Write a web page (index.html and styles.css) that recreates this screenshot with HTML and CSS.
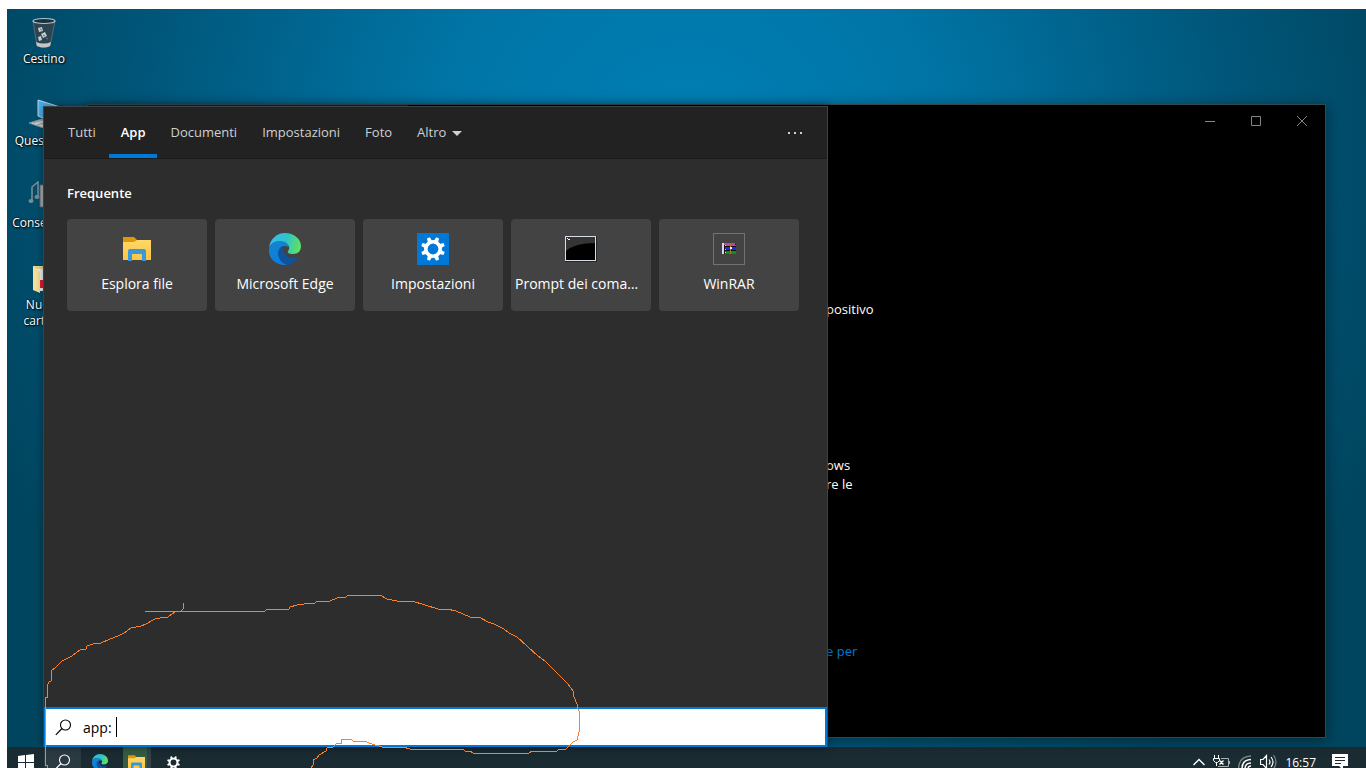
FILE: index.html
```html
<!DOCTYPE html>
<html lang="it">
<head>
<meta charset="UTF-8">
<meta name="viewport" content="width=device-width, initial-scale=1.0">
<title>Desktop</title>
<link rel="stylesheet" href="styles.css">
</head>
<body>

<!-- icons used both in the search panel and in the taskbar -->
<svg class="defs" aria-hidden="true">
  <defs>
    <linearGradient id="folderFill" x1="0" y1="0" x2="0" y2="1">
      <stop offset="0" stop-color="#ffd868"/>
      <stop offset="1" stop-color="#fbc540"/>
    </linearGradient>
    <linearGradient id="edgeTop" x1="0" y1="0.4" x2="1" y2="0.6">
      <stop offset="0" stop-color="#35bdf0"/>
      <stop offset="0.5" stop-color="#2fc3c8"/>
      <stop offset="1" stop-color="#62e35c"/>
    </linearGradient>
    <linearGradient id="edgeLeft" x1="0" y1="0" x2="0.3" y2="1">
      <stop offset="0" stop-color="#1585cf"/>
      <stop offset="1" stop-color="#0a7ede"/>
    </linearGradient>
    <symbol id="folder" viewBox="0 0 28 24">
      <path d="M0 0h11l3 3v4H0z" fill="#dd9a05"/>
      <path d="M0 5h11l3-2h14v20H0z" fill="url(#folderFill)"/>
      <path d="M5 24V14q0-2 2-2h14q2 0 2 2v10h-4v-7H9v7z" fill="#3b97dc"/>
    </symbol>
    <symbol id="edge" viewBox="0 0 32 32">
      <path d="M0 15C1 6 8 0 16 0c9 0 16 6 16 13 0 5-3 8-8 8-4 0-6-1-5-3 2-2 2-6-3-8-6-3-14-1-16 5z" fill="url(#edgeTop)"/>
      <path d="M0 16C1 10 6 8 11 8c5 0 9 3 9 6-6-3-11 1-10 7 1 6 4 9 8 11C8 33-1 26 0 16z" fill="url(#edgeLeft)"/>
      <path d="M14 13c-5 2-6 7-4 12 2 4 5 6 9 7 5-1 8-4 10-7 0-1 0-1-1-1-4 2-9 1-12-3-2-3-3-6-2-8z" fill="#10529b"/>
    </symbol>
    <symbol id="gear" viewBox="-12 -12 24 24">
      <circle r="7.2" fill="none" stroke="currentColor" stroke-width="3.6"/>
      <g fill="currentColor">
        <path id="tooth" d="M-2.2-8l.6-4h3.2l.6 4z" transform="rotate(22.5)"/>
        <use href="#tooth" transform="rotate(45)"/>
        <use href="#tooth" transform="rotate(90)"/>
        <use href="#tooth" transform="rotate(135)"/>
        <use href="#tooth" transform="rotate(180)"/>
        <use href="#tooth" transform="rotate(225)"/>
        <use href="#tooth" transform="rotate(270)"/>
        <use href="#tooth" transform="rotate(315)"/>
      </g>
    </symbol>
    <symbol id="lens" viewBox="0 0 17 17">
      <circle cx="10.5" cy="6" r="5" fill="none" stroke="currentColor" stroke-width="1.1"/>
      <path d="M7 9.5L.8 15.8" fill="none" stroke="currentColor" stroke-width="1.2"/>
    </symbol>
  </defs>
</svg>

<div class="desktop">
  <main class="workspace">

    <div class="shortcuts">
      <a class="shortcut" href="#">
        <svg class="shortcut-icon" viewBox="0 0 32 32">
          <path d="M5 4l4 25q7 3 13 0l5-25z" fill="#2b4450" stroke="#566a74" stroke-width="1"/>
          <path d="M8 25l1 4q7 3 13 0l1-4q-7 3-15 0z" fill="#c3c5c8"/>
          <ellipse cx="16" cy="4" rx="11" ry="2.5" fill="#16323f" stroke="#b5c2c8" stroke-width="1.2"/>
          <path d="M10 11l4-1 1 4-4 1zM13 17l4-2 2 4-4 2zM10 20l3-1 1 4-3 1z" fill="#c6cdd1"/>
          <path d="M12 12l2 1M15 18l2 1M18 21l2 1" stroke="#627985"/>
        </svg>
        <span>Cestino</span>
      </a>
      <a class="shortcut" href="#">
        <svg class="shortcut-icon" viewBox="0 0 32 32">
          <path d="M10 1l22 7v18L10 17z" fill="#47aeed" stroke="#c4d3dc"/>
          <path d="M1 24l13-4 16 6-12 4z" fill="#c9cdd0" stroke="#7f8b91"/>
          <path d="M5 24l10-3M9 26l10-3" stroke="#8d979c"/>
        </svg>
        <span>Questo PC</span>
      </a>
      <a class="shortcut" href="#">
        <svg class="shortcut-icon" viewBox="0 0 32 32">
          <path d="M12 4h16v22H12z" fill="#a8aeb1" stroke="#5c686d"/>
          <path d="M4 19V6l6-5v15" fill="none" stroke="#7e8a91" stroke-width="1.6"/>
          <ellipse cx="3" cy="20" rx="2.5" ry="2" fill="#7e8a91"/>
          <ellipse cx="9" cy="16" rx="2.5" ry="2" fill="#7e8a91"/>
        </svg>
        <span>Conservato</span>
      </a>
      <a class="shortcut" href="#">
        <svg class="shortcut-icon" viewBox="0 0 32 32">
          <path d="M5 3h22v24H5z" fill="#ead48c"/>
          <path d="M9 6h16v22H9z" fill="#eef0f1"/>
          <path d="M11 17h8v8h-8z" fill="#d5202e"/>
          <path d="M5 3l7 6v21l-7-3z" fill="#f6e09a"/>
        </svg>
        <span>Nuova<br>cartella</span>
      </a>
    </div>

    <section class="window">
      <div class="window-nav"></div>
      <div class="window-page">
        <div class="window-controls">
          <button class="control" aria-label="Riduci a icona"><svg width="10" height="10"><path d="M0 5.5h10"/></svg></button>
          <button class="control" aria-label="Ingrandisci"><svg width="10" height="10"><path d="M.5.5h9v9h-9z"/></svg></button>
          <button class="control" aria-label="Chiudi"><svg width="10" height="10"><path d="M0 0l10 10M10 0L0 10"/></svg></button>
        </div>
        <div class="window-text">
          <p>positivo</p>
          <p class="block">ows<br>re le</p>
          <p class="link-row"><a href="#">e per</a></p>
        </div>
      </div>
    </section>

    <section class="search-panel">
      <nav class="tabs">
        <button class="tab">Tutti</button>
        <button class="tab active">App</button>
        <button class="tab">Documenti</button>
        <button class="tab">Impostazioni</button>
        <button class="tab">Foto</button>
        <button class="tab">Altro <span class="arrow"></span></button>
        <button class="more" aria-label="Opzioni">
          <svg width="14" height="2" fill="currentColor"><path d="M0 0h2v2H0zM6 0h2v2H6zM12 0h2v2h-2z"/></svg>
        </button>
      </nav>

      <div class="results">
        <h2>Frequente</h2>
        <div class="cards">
          <button class="card">
            <svg class="card-icon" viewBox="0 0 32 32"><use href="#folder" x="2" y="4" width="28" height="24"/></svg>
            <span>Esplora file</span>
          </button>
          <button class="card">
            <svg class="card-icon"><use href="#edge"/></svg>
            <span>Microsoft Edge</span>
          </button>
          <button class="card">
            <svg class="card-icon settings" viewBox="0 0 32 32"><use href="#gear" x="4" y="4" width="24" height="24"/></svg>
            <span>Impostazioni</span>
          </button>
          <button class="card">
            <svg class="card-icon" viewBox="0 0 32 32">
              <path d="M0 3h32v26H0z" fill="#20272d"/>
              <path d="M0 3h31v25H0z" fill="#d5dde8"/>
              <path d="M1 4h29v23H1z" fill="#000"/>
              <path d="M1 4h29v6Q10 10 1 18z" fill="#353535"/>
              <path d="M2 5.500h1M3 6.500h2" stroke="#fff"/>
            </svg>
            <span class="long">Prompt dei comandi</span>
          </button>
          <button class="card">
            <svg class="card-icon" viewBox="0 0 32 32" shape-rendering="crispEdges">
              <path d="M.5.5h31v31H.5z" fill="none" stroke="#727272"/>
              <path d="M11 10h11l1 2v9H11z" fill="#111"/>
              <path d="M11 10h11l1 3H12z" fill="#b34ca0"/>
              <path d="M12 14h11v3H12z" fill="#1c2bdd"/>
              <path d="M12 18h11v3H12z" fill="#0c9112"/>
              <path d="M9 10h2v11H9z" fill="#d8d8ee"/>
              <path d="M17 10h1v11h-1z" fill="#b0732c"/>
              <path d="M17 14h2v2h-2z" fill="#eee"/>
              <path d="M12 12h1v1h-1zM12 16h1v1h-1zM12 19h1v1h-1z" fill="#e8d34a"/>
            </svg>
            <span>WinRAR</span>
          </button>
        </div>
      </div>

      <label class="search-box">
        <svg width="17" height="17"><use href="#lens"/></svg>
        <input type="text" value="app: " aria-label="Cerca">
        <span class="caret"></span>
      </label>
    </section>
  </main>

  <footer class="taskbar">
    <button class="task" aria-label="Start">
      <svg width="16" height="16" fill="#fff"><path d="M0 2l7-1v7H0zM8 1l8-1v8H8zM0 9h7v7l-7-1zM8 9h8v7l-8-1z"/></svg>
    </button>
    <button class="task current" aria-label="Cerca"><svg width="17" height="17"><use href="#lens"/></svg></button>
    <button class="task" aria-label="Microsoft Edge"><svg width="16" height="16"><use href="#edge"/></svg></button>
    <button class="task explorer" aria-label="Esplora file"><svg width="17" height="15"><use href="#folder"/></svg></button>
    <button class="task" aria-label="Impostazioni"><svg width="13" height="13"><use href="#gear"/></svg></button>

    <div class="tray">
      <svg width="12" height="16" fill="none" stroke="#fff" stroke-width="1.400"><path d="M.5 11L6 5.500l5.500 5.500"/></svg>
      <svg width="17" height="16" fill="none" stroke="#fff">
        <path d="M1.500 1v3M5.500 1v3M.5 4.500h6v2l-2 2h-2l-2-2zM3.500 8v4"/>
        <path d="M8 4.500h7.500v8H5M16.500 7v3" stroke="#aab1b4"/>
        <path d="M6.500 6.500l4 4M10.500 6.500l-4 4" stroke-width="1.400"/>
      </svg>
      <svg width="14" height="16" fill="none" stroke="#fff" stroke-width="1.400">
        <path d="M.7 14Q1 2.500 13 2" stroke="#7c878b"/>
        <path d="M4 14.500Q4 6 13 5.500M7 15q0-6 6-6M10 15q0-3 3-3"/>
      </svg>
      <svg width="17" height="16" fill="none" stroke="#fff" stroke-width="1.200">
        <path d="M.5 5.500h2.500l3.500-4v13l-3.500-4H.5z"/>
        <path d="M9 5.500q2 2.500 0 5M11 3q4 5 0 10"/>
        <path d="M13.500 1q5 7 0 14" stroke="#7c878b"/>
      </svg>
      <time class="clock">16:57</time>
      <svg width="16" height="16"><path d="M0 0h16v12h-5v4l-4-4H0z" fill="#fff"/><path d="M3 3.500h10M3 6.500h10M3 9.500h6" stroke="#1c2b31"/></svg>
    </div>
  </footer>
</div>

<!-- freehand pen mark around the search box -->
<svg class="pen-mark" width="600" height="768" aria-hidden="true">
  <polyline points="183,603 183,609 181,611 175,612 172,614 168,617 160,618 155,619 146,624 141,626 131,628 124,633 118,636 110,639 101,643 93,644 87,646 86,649 80,650 72,656 62,661 55,668 51,671 51,681 49,682 47,686 47,697 45,697 45,765 47,765 47,768"/>
  <polyline points="145,611 265,611 267,609 289,609 290,607 297,605 304,604 306,603 315,603 317,601 330,601 337,598 346,597 348,595 380,595 387,599 397,601 412,601 438,609 447,609 456,611 470,617 479,617 488,622 494,624 504,629 509,633 517,637 538,656 545,661 568,684 573,691 574,697 577,704 578,709 579,711 579,732 577,740 573,742 566,749 559,749 557,751 532,751 529,753 473,753 470,751 465,751 463,749 410,749 403,747 382,747 372,744 364,741 353,741 351,739 341,739 341,743 337,743 333,747 327,748 326,751 319,755 317,758 313,760 313,765 311,768"/>
</svg>

</body>
</html>
```

FILE: styles.css
```css
* {
  box-sizing: border-box;
}

body {
  margin: 0;
  padding: 9px 0 0 7px;
  height: 100vh;
  overflow: hidden;
  background: #fff;
  font-family: "Segoe UI", "Open Sans", "Noto Sans", sans-serif;
  font-size: 13px;
  color: #fff;
}

button {
  border: 0;
  padding: 0;
  background: none;
  color: inherit;
  font: inherit;
}

h2, p {
  margin: 0;
}

a {
  color: inherit;
  text-decoration: none;
}

.defs {
  position: absolute;
  width: 0;
  height: 0;
}

.desktop {
  height: 100%;
  display: flex;
  flex-direction: column;
  background: radial-gradient(ellipse 55% 100% at 50% 20%, #0080b6 0%, #0074a5 35%, #005578 75%, #00455f 100%);
}

.workspace {
  flex: 1;
  position: relative;
}

/* desktop shortcuts */
.shortcuts {
  width: 74px;
  padding-top: 8px;
  display: flex;
  flex-direction: column;
}

.shortcut {
  height: 82px;
  display: flex;
  flex-direction: column;
  align-items: center;
  font-size: 12px;
  line-height: 16px;
  text-align: center;
  text-shadow: 1px 1px 2px #000, 0 0 2px #000;
}

.shortcut-icon {
  width: 32px;
  height: 32px;
  margin-bottom: 2px;
}

/* window behind the search panel */
.window {
  position: absolute;
  top: 95px;
  left: 80px;
  right: 40px;
  bottom: 9px;
  display: flex;
  background: #000;
  border: 1px solid #34474f;
  box-shadow: 0 2px 14px rgba(0, 0, 0, 0.4);
}

.window-nav {
  width: 320px;
  background: #1f1f1f;
}

.window-page {
  flex: 1;
}

.window-controls {
  display: flex;
  justify-content: flex-end;
}

.control {
  width: 46px;
  height: 32px;
}

.control svg {
  fill: none;
  stroke: #858585;
}

.window-text {
  padding: 163px 0 0 418px;
  line-height: 19px;
}

.window-text .block {
  margin-top: 137px;
}

.window-text .link-row {
  margin-top: 148px;
  color: #0078d7;
}

/* search panel */
.search-panel {
  position: absolute;
  top: 97px;
  left: 36px;
  bottom: 0;
  width: 785px;
  display: flex;
  flex-direction: column;
  background: #2d2d2d;
  border: 1px solid #3c4346;
  border-bottom: 0;
  box-shadow: 0 0 8px rgba(0, 0, 0, 0.4);
}

.tabs {
  height: 52px;
  padding: 0 25px 0 12px;
  display: flex;
  gap: 1px;
  background: #222;
  border-bottom: 1px solid #1b1b1b;
  color: #d0d0d0;
}

.tab {
  padding: 2px 12px 0;
  border-bottom: 4px solid transparent;
}

.tab.active {
  border-color: #0078d7;
  color: #fff;
  font-weight: 600;
}

.arrow {
  display: inline-block;
  margin-left: 2px;
  border: 5px solid transparent;
  border-top-color: currentColor;
  border-bottom: 0;
  vertical-align: middle;
}

.more {
  margin-left: auto;
  display: flex;
  align-items: center;
}

.results {
  flex: 1;
  padding: 24px 23px;
}

.results h2 {
  font-size: 13px;
  font-weight: 600;
  line-height: 20px;
}

.cards {
  display: flex;
  gap: 8px;
  margin-top: 16px;
}

.card {
  width: 140px;
  height: 92px;
  padding: 0 4px 2px;
  display: flex;
  flex-direction: column;
  align-items: center;
  justify-content: center;
  gap: 8px;
  background: #434343;
  border-radius: 4px;
  font-size: 14px;
  line-height: 22px;
}

.card span {
  max-width: 100%;
  overflow: hidden;
  text-overflow: ellipsis;
  white-space: nowrap;
}

.card .long {
  align-self: flex-start;
  max-width: 128px;
}

.card-icon {
  width: 32px;
  height: 32px;
}

.settings {
  background: #0078d7;
}

.search-box {
  position: relative;
  height: 40px;
  padding: 0 9px;
  display: flex;
  align-items: center;
  gap: 11px;
  background: #fff;
  border: 2px solid #0078d7;
  color: #000;
}

.search-box input {
  flex: 1;
  min-width: 0;
  border: 0;
  padding: 0;
  outline: 0;
  background: none;
  font: inherit;
  font-size: 14px;
}

.caret {
  position: absolute;
  left: 70px;
  top: 8px;
  width: 1px;
  height: 20px;
  background: #000;
}

/* taskbar */
.taskbar {
  height: 21px;
  overflow: hidden;
  display: flex;
  background: #1b2b32;
}

.task {
  width: 37px;
  height: 30px;
  display: flex;
  align-items: center;
  justify-content: center;
}

.task.current {
  background: #2b3a41;
}

.task.explorer {
  background: linear-gradient(90deg, transparent 5px, #365c45 5px, #365c45 29px, #33434a 29px, #33434a 33px, transparent 33px);
}

.tray {
  margin-left: auto;
  padding-right: 18px;
  height: 30px;
  display: flex;
  align-items: center;
  gap: 8px;
}

.clock {
  font-size: 12px;
  margin-right: 8px;
}

.pen-mark {
  position: absolute;
  top: 0;
  left: 0;
  pointer-events: none;
  fill: none;
  stroke: #ff7f27;
  shape-rendering: crispEdges;
}
```
